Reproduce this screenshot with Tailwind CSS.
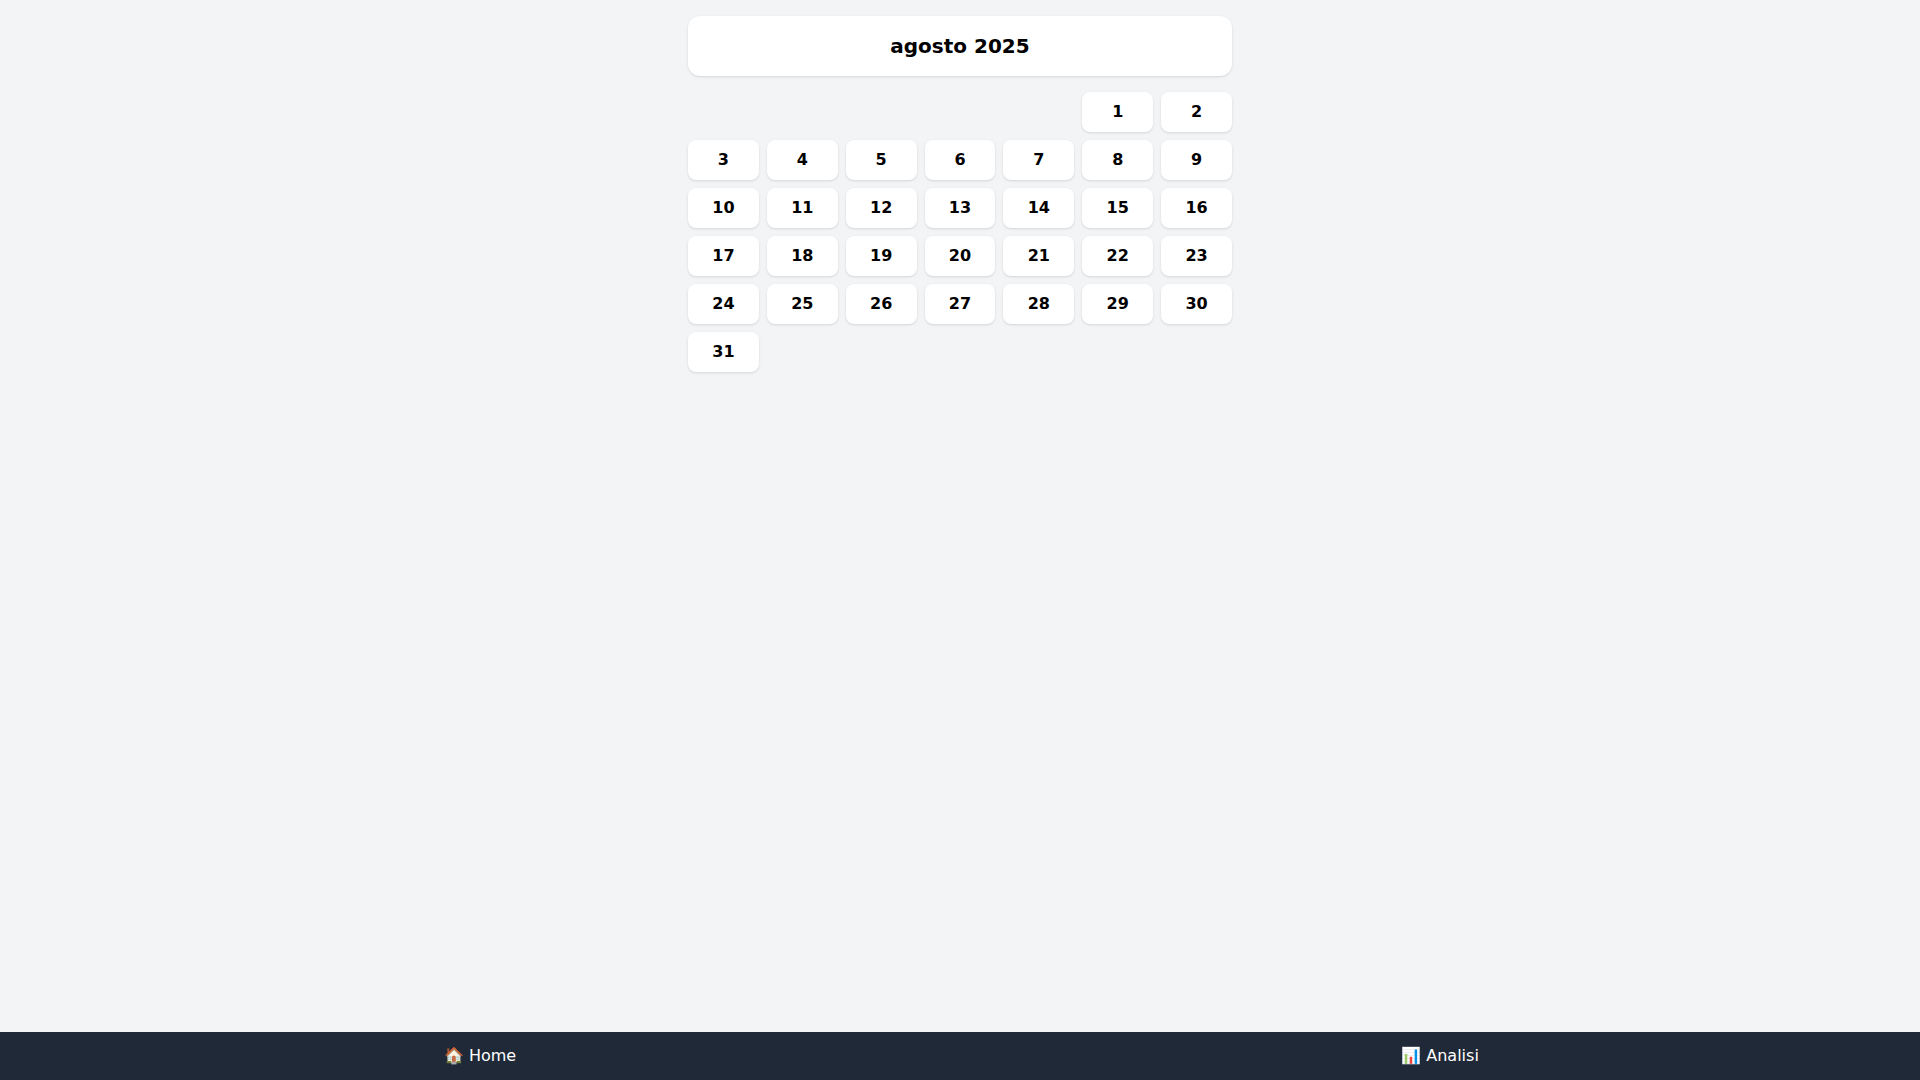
<!DOCTYPE html>
<html lang="it">
<head>
<meta charset="utf-8">
<meta name="viewport" content="width=device-width, initial-scale=1">
<title>Calendario</title>
<script src="https://cdn.jsdelivr.net/npm/@tailwindcss/browser@4"></script>
</head>
<body class="flex min-h-screen flex-col bg-gray-100 font-['DejaVu_Sans',sans-serif] text-black">
<main class="mx-auto w-full max-w-xl flex-1 p-4">
<header class="mb-4 rounded-xl bg-white p-4 text-center shadow">
<h1 class="text-xl font-bold">agosto 2025</h1>
</header>
<div class="grid grid-cols-7 gap-2 text-center">
<button class="col-start-6 rounded-lg bg-white p-2 font-bold shadow">1</button>
<button class="rounded-lg bg-white p-2 font-bold shadow">2</button>
<button class="rounded-lg bg-white p-2 font-bold shadow">3</button>
<button class="rounded-lg bg-white p-2 font-bold shadow">4</button>
<button class="rounded-lg bg-white p-2 font-bold shadow">5</button>
<button class="rounded-lg bg-white p-2 font-bold shadow">6</button>
<button class="rounded-lg bg-white p-2 font-bold shadow">7</button>
<button class="rounded-lg bg-white p-2 font-bold shadow">8</button>
<button class="rounded-lg bg-white p-2 font-bold shadow">9</button>
<button class="rounded-lg bg-white p-2 font-bold shadow">10</button>
<button class="rounded-lg bg-white p-2 font-bold shadow">11</button>
<button class="rounded-lg bg-white p-2 font-bold shadow">12</button>
<button class="rounded-lg bg-white p-2 font-bold shadow">13</button>
<button class="rounded-lg bg-white p-2 font-bold shadow">14</button>
<button class="rounded-lg bg-white p-2 font-bold shadow">15</button>
<button class="rounded-lg bg-white p-2 font-bold shadow">16</button>
<button class="rounded-lg bg-white p-2 font-bold shadow">17</button>
<button class="rounded-lg bg-white p-2 font-bold shadow">18</button>
<button class="rounded-lg bg-white p-2 font-bold shadow">19</button>
<button class="rounded-lg bg-white p-2 font-bold shadow">20</button>
<button class="rounded-lg bg-white p-2 font-bold shadow">21</button>
<button class="rounded-lg bg-white p-2 font-bold shadow">22</button>
<button class="rounded-lg bg-white p-2 font-bold shadow">23</button>
<button class="rounded-lg bg-white p-2 font-bold shadow">24</button>
<button class="rounded-lg bg-white p-2 font-bold shadow">25</button>
<button class="rounded-lg bg-white p-2 font-bold shadow">26</button>
<button class="rounded-lg bg-white p-2 font-bold shadow">27</button>
<button class="rounded-lg bg-white p-2 font-bold shadow">28</button>
<button class="rounded-lg bg-white p-2 font-bold shadow">29</button>
<button class="rounded-lg bg-white p-2 font-bold shadow">30</button>
<button class="rounded-lg bg-white p-2 font-bold shadow">31</button>
</div>
</main>
<nav class="sticky bottom-0 flex bg-[#1f2937] text-center text-white">
<a href="#home" class="flex-1 py-3">🏠 Home</a>
<a href="#analisi" class="flex-1 py-3">📊 Analisi</a>
</nav>
</body>
</html>
